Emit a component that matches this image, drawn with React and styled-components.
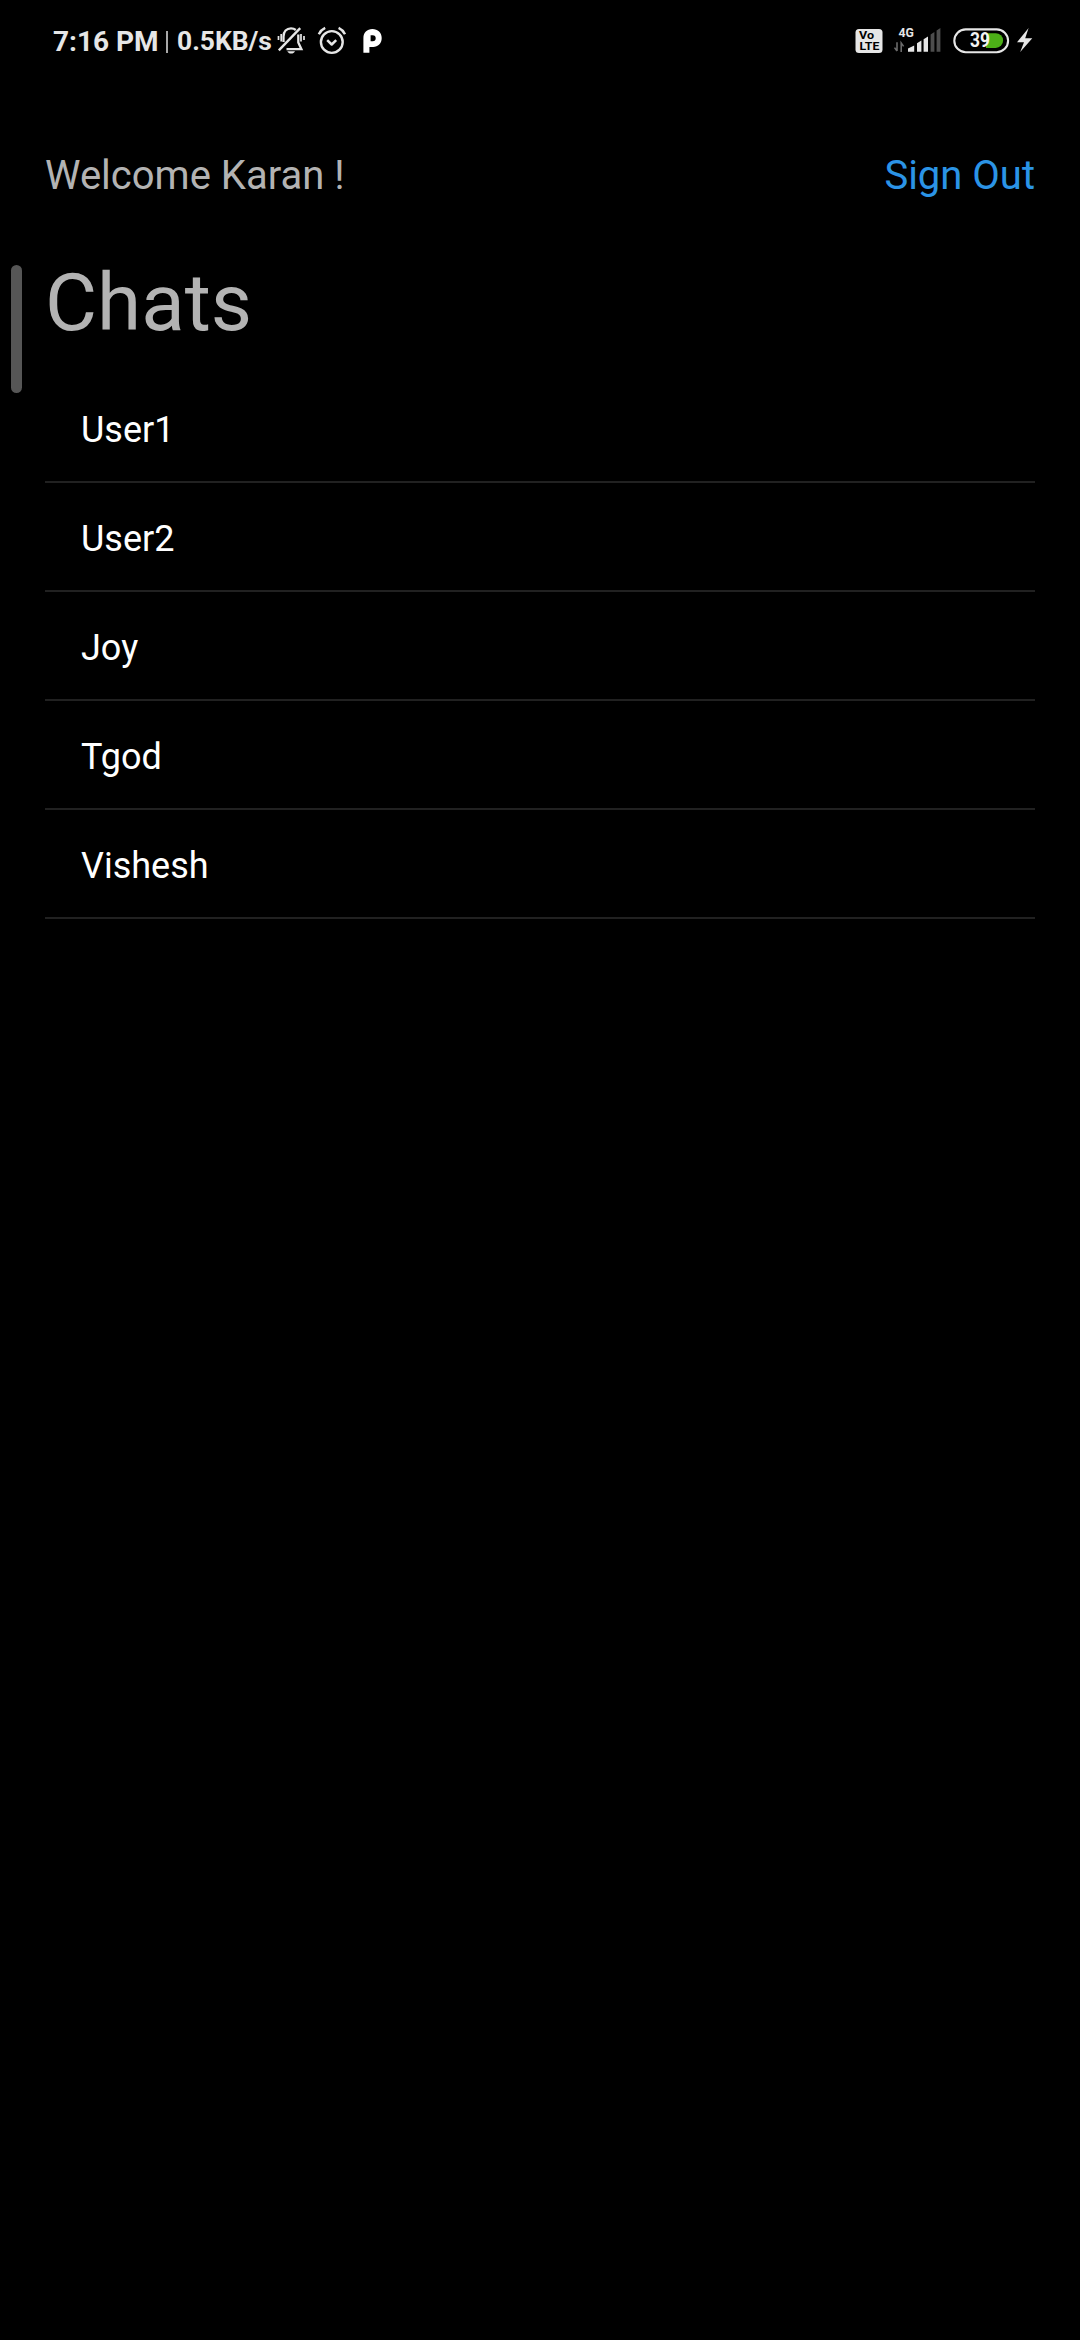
import React from "react";
import styled, { createGlobalStyle } from "styled-components";

const GlobalStyle = createGlobalStyle`
  *, *::before, *::after { box-sizing: border-box; }
  body { margin: 0; background: #000; font-family: Roboto, "Noto Sans", sans-serif; }
`;

const Screen = styled.div`
  position: relative;
  display: flex;
  flex-direction: column;
  width: 1080px;
  height: 2340px;
  overflow: hidden;
  background: #000;
`;

const StatusBar = styled.header`
  display: flex;
  justify-content: space-between;
  height: 82px;
  padding: 0 47px 0 53px;
  color: #e6e6e6;
`;

const StatusGroup = styled.div`
  display: flex;
  align-items: center;
  height: 82px;
`;

const StatusText = styled.span`
  width: ${(p) => p.$width}px;
  padding-top: ${(p) => p.$drop || 0}px;
  font-size: ${(p) => p.$size}px;
  font-weight: 700;
  line-height: 80px;
  white-space: nowrap;
`;

const StatusDivider = styled.i`
  width: 2px;
  height: 22px;
  margin: 1px 9px 0 10px;
  background: #a8a8a8;
`;

const StatusIcon = styled.svg`
  display: block;
  flex: none;
  width: ${(p) => p.$w}px;
  height: 30px;
  margin-left: ${(p) => p.$gap || 0}px;
  fill: none;
  stroke: none;
  color: #e6e6e6;
  font-family: Roboto, sans-serif;
`;

const HomeHeader = styled.div`
  display: flex;
  justify-content: space-between;
  padding: 69px 45px 0;
  font-size: 40px;
  line-height: 50px;
`;

const Welcome = styled.span`
  color: #b3b3b3;
`;

const SignOut = styled.a`
  color: #2b94e6;
`;

const Title = styled.h1`
  margin: 52px 0 0 45px;
  color: #b3b3b3;
  font-size: 80px;
  font-weight: 400;
  line-height: 100px;
`;

const ChatList = styled.ul`
  margin: 21px 45px 0;
  padding: 0;
  list-style: none;
`;

const ChatRow = styled.li`
  height: 109px;
  padding: 5px 36px 0;
  border-bottom: 2px solid #212121;
  color: #fff;
  font-size: 36px;
  line-height: 102px;
`;

const EdgeHandle = styled.div`
  position: absolute;
  top: 265px;
  left: 11px;
  width: 11px;
  height: 128px;
  border-radius: 6px;
  background: #565656;
`;

const MutedBell = () => (
  <StatusIcon $w={29} $gap={3} viewBox="277 26 29 30">
    <g stroke="currentColor" strokeWidth="2.3">
      <path d="M283.5 42V36.5C283.5 31.5 286.5 28.4 291 28.4C293 28.4 294.6 29 295.8 30" />
      <path d="M298.3 34.5V42.5L301.4 49.2H286.5" />
      <path d="M300.2 28.2L278.8 50.4" strokeWidth="2.4" />
      <path d="M281.2 34V41.5M278.5 36V40M301 34V41.5M304 36V40" strokeWidth="1.7" />
    </g>
    <path d="M287.3 51.2H295C294.2 52.8 292.9 53.6 291.1 53.6C289.4 53.6 288.1 52.8 287.3 51.2Z" fill="currentColor" />
  </StatusIcon>
);

const Alarm = () => (
  <StatusIcon $w={30} $gap={11} viewBox="317 26 30 30">
    <g stroke="currentColor" strokeWidth="2.4">
      <circle cx="331.8" cy="42" r="10.9" />
      <path d="M318.8 34.2C320.2 31.3 322.4 29.2 325.2 27.9M345 34.2C343.6 31.3 341.4 29.2 338.6 27.9" />
      <path d="M327.2 40.2L331.7 44.5L336.2 40.2" strokeLinejoin="round" strokeWidth="2.5" />
    </g>
  </StatusIcon>
);

const ParkedBadge = () => (
  <StatusIcon $w={20} $gap={16} viewBox="363 26 20 30">
    <path
      fill="#fff"
      fillRule="evenodd"
      d="M363.4 52.8V38C363.4 32.5 367 29 372.4 29C377.8 29 381.7 32.6 381.7 38C381.7 43.5 378 47 373.2 47H369.4V52.8ZM370.6 35.2V41.2H372.7A3 3 0 0 0 372.7 35.2Z"
    />
  </StatusIcon>
);

const VoLte = () => (
  <StatusIcon $w={28} viewBox="855 26 28 30">
    <rect x="855.5" y="29" width="27" height="24" rx="3.5" fill="currentColor" />
    <text x="859" y="39.4" fontSize="10" fontWeight="700" textLength="15" lengthAdjust="spacingAndGlyphs" fill="#000">Vo</text>
    <text x="859.6" y="49.9" fontSize="10.6" fontWeight="700" textLength="19.8" lengthAdjust="spacingAndGlyphs" fill="#000">LTE</text>
  </StatusIcon>
);

const Signal = () => (
  <StatusIcon $w={48} $gap={10} viewBox="893 26 48 30">
    <text x="898.4" y="37" fontSize="12.8" fontWeight="700" textLength="15.4" lengthAdjust="spacingAndGlyphs" fill="currentColor">4G</text>
    <path d="M897 42.3V51M894.5 47.6L897 51M901.2 52V43L903.6 46.4" stroke="#6a6a6a" strokeWidth="1.6" />
    <g fill="currentColor">
      <path d="M908 48.6L914.2 45.6V51.8H908ZM917 43.3L921.4 40.5V51.8H917ZM923.6 39.2L928 36.4V51.8H923.6Z" />
      <path fill="#4d4d4d" d="M930.6 34.6L934.4 32V51.8H930.6ZM936.6 30.4L940.4 28V51.8H936.6Z" />
    </g>
  </StatusIcon>
);

const Battery = () => (
  <StatusIcon $w={57} $gap={12} viewBox="953 26 57 30">
    <rect x="954.3" y="29.4" width="53.8" height="22.8" rx="11.4" stroke="currentColor" strokeWidth="2.1" />
    <path fill="#4caf17" d="M986 33.2H995.7A7.4 7.4 0 0 1 995.7 48H986Z" />
    <text x="970" y="47" fontSize="19.4" fontWeight="700" textLength="20" lengthAdjust="spacingAndGlyphs" fill="#f2f2f2">39</text>
  </StatusIcon>
);

const Bolt = () => (
  <StatusIcon $w={16} $gap={7} viewBox="1017 26 16 30">
    <path fill="currentColor" d="M1028.6 28L1017 42.3H1024L1020.2 52L1032.3 38.2H1025.2Z" />
  </StatusIcon>
);

const chats = ["User1", "User2", "Joy", "Tgod", "Vishesh"];

export default function App() {
  return (
    <>
      <GlobalStyle />
      <Screen>
        <StatusBar>
          <StatusGroup>
            <StatusText $width={103} $size={28} $drop={2}>7:16 PM</StatusText>
            <StatusDivider />
            <StatusText $width={97} $size={26.4}>0.5KB/s</StatusText>
            <MutedBell />
            <Alarm />
            <ParkedBadge />
          </StatusGroup>
          <StatusGroup>
            <VoLte />
            <Signal />
            <Battery />
            <Bolt />
          </StatusGroup>
        </StatusBar>
        <HomeHeader>
          <Welcome>Welcome Karan !</Welcome>
          <SignOut>Sign Out</SignOut>
        </HomeHeader>
        <Title>Chats</Title>
        <ChatList>
          {chats.map((name) => (
            <ChatRow key={name}>{name}</ChatRow>
          ))}
        </ChatList>
        <EdgeHandle />
      </Screen>
    </>
  );
}
